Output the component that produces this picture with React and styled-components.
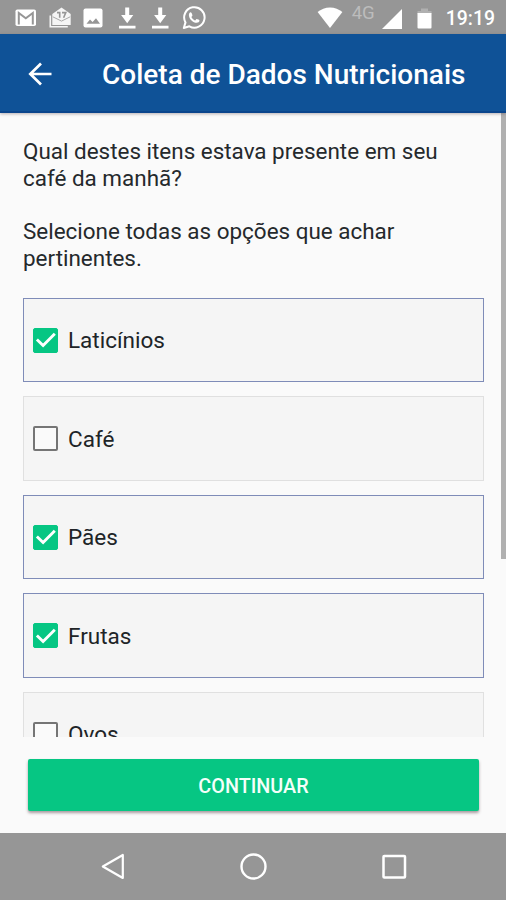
import React, { useState } from 'react';
import styled, { createGlobalStyle } from 'styled-components';

const blue = '#0f5297';
const green = '#06c683';
const grey = '#969696';

const GlobalStyle = createGlobalStyle`
  * { box-sizing: border-box; }
  body {
    margin: 0;
    background: #fafafa;
    font-family: Roboto, sans-serif;
    overflow: hidden;
  }
`;

const Screen = styled.div`
  display: flex;
  flex-direction: column;
  width: 506px;
  height: 900px;
  overflow: hidden;
  background: #fafafa;
`;

const StatusBar = styled.div`
  flex: none;
  display: flex;
  align-items: center;
  justify-content: space-between;
  height: 34px;
  padding: 1px 11px 0 14px;
  background: ${grey};
  color: #fff;
`;

const Notifications = styled.div`
  display: flex;
  gap: 9.6px;
`;

const System = styled.div`
  display: flex;
  align-items: center;
`;

const Icon = styled.svg`
  display: block;
  flex: none;
  width: ${({ $w }) => $w || 24}px;
  height: ${({ $h }) => $h || 24}px;
`;

const Network = styled.span`
  margin: 0 7px 9px 9px;
  color: #bcbcbc;
  font-size: 18.6px;
  line-height: 18px;
`;

const Clock = styled.span`
  margin-left: 14px;
  padding-top: 2px;
  font-size: 19.4px;
  font-weight: 500;
  line-height: 24px;
`;

const Header = styled.header`
  flex: none;
  position: relative;
  display: flex;
  align-items: center;
  height: 79px;
  padding: 5px 0 0 24px;
  background: ${blue};
  border-bottom: 2px solid #0a458c;
  box-shadow: 0 1px 3px rgba(80, 60, 70, 0.4);
  z-index: 1;
`;

const BackButton = styled.button`
  width: 32px;
  margin-right: 46px;
  padding: 0;
  border: 0;
  background: none;
`;

const Title = styled.h1`
  margin: 0;
  color: #fff;
  font-size: 28px;
  font-weight: 500;
  line-height: 32px;
  white-space: nowrap;
`;

const Body = styled.main`
  flex: none;
  display: flex;
  justify-content: space-between;
  height: 624px;
  overflow: hidden;
`;

const Content = styled.div`
  width: 484px;
  padding: 25.4px 0 0 23px;
`;

const Question = styled.p`
  margin: 0 0 26.6px;
  color: #25292c;
  font-size: 22.45px;
  line-height: 26.7px;
`;

const Options = styled.div`
  display: flex;
  flex-direction: column;
  gap: 14px;
  margin-top: -0.8px;
`;

const Option = styled.button`
  flex: none;
  display: flex;
  align-items: center;
  height: 84.5px;
  padding: 1px 0 0 8px;
  border: 1px solid ${({ $checked }) => ($checked ? '#7f8cb8' : '#e0e0e0')};
  background: #f5f5f5;
  color: #202427;
  font-family: inherit;
  font-size: 22.5px;
  line-height: 28px;
  text-align: left;
`;

const Box = styled.span`
  display: flex;
  align-items: center;
  justify-content: center;
  width: 25px;
  height: 25px;
  margin: 0 10px 0 1px;
  border: ${({ $checked }) => ($checked ? '1px' : '2px')} solid
    ${({ $checked }) => ($checked ? green : '#757575')};
  border-radius: 2px;
  background: ${({ $checked }) => ($checked ? green : '#fafafa')};
`;

const Scrollbar = styled.div`
  width: 5px;
  height: 446px;
  background: #b0b0b0;
`;

const Footer = styled.footer`
  flex: none;
  height: 96px;
  padding: 22px 27px 0 28px;
`;

const Continue = styled.button`
  display: block;
  width: 100%;
  height: 52px;
  padding: 2px 0 0;
  border: 0;
  border-radius: 2px;
  background: ${green};
  box-shadow: 0 2px 3px rgba(70, 40, 50, 0.45);
  color: #f4fffa;
  font-family: inherit;
  font-size: 19.8px;
  font-weight: 500;
  text-transform: uppercase;
`;

const NavBar = styled.nav`
  flex: none;
  display: flex;
  align-items: center;
  justify-content: center;
  gap: 112.5px;
  height: 67px;
  padding-left: 1px;
  background: ${grey};
`;

const options = [
  { name: 'Laticínios', checked: true },
  { name: 'Café', checked: false },
  { name: 'Pães', checked: true },
  { name: 'Frutas', checked: true },
  { name: 'Ovos', checked: false },
];

const Mail = () => (
  <Icon viewBox='0 0 24 24'>
    <rect x='1.5' y='3.5' width='20.5' height='16.5' rx='1.8' fill='#fff' />
    <path d='M4.8 18.500V7l7 5.300 7-5.300v11.500' fill='none' stroke={grey} strokeWidth='2' />
  </Icon>
);

const Inbox = () => (
  <Icon viewBox='0 0 24 24'>
    <path d='M2.300 9.500v11.200h17.500' fill='none' stroke='#f5f5f5' strokeWidth='1.600' />
    <path d='M4.300 8 13.500 1.500 22.700 8v10.900H4.300z' fill='#f5f5f5' />
    <path d='M9 6.600h2.700v5.200M14 6.600h3.800l-2.200 5.200' fill='none' stroke={grey} strokeWidth='1.600' />
    <path d='m4.800 10.800 8.700 4.300 8.700-4.300' fill='none' stroke={grey} strokeWidth='.8' />
  </Icon>
);

const Picture = () => (
  <Icon viewBox='0 0 24 24'>
    <rect x='2.500' y='2.500' width='19' height='19' rx='2' fill='#fff' />
    <path d='M5.500 17.800 9 13.600l2.600 2.500 3.400-3.900 4 5.600z' fill={grey} />
  </Icon>
);

const Download = () => (
  <Icon viewBox='0 0 24 24'>
    <path d='M10.200 1.500h4v7.500h4.100L12.200 17.300 6.100 9h4.100zM4 19.700h16.500v2.900H4z' fill='#fff' />
  </Icon>
);

const Chat = () => (
  <Icon viewBox='0 0 24 24'>
    <path
      d='M1.800 22 3.500 16.400a10.200 10.200 0 1 1 3.900 3.900z'
      fill='none'
      stroke='#fff'
      strokeWidth='2'
      strokeLinejoin='round'
    />
    <path
      d='M8.800 6.300c-1.300.2-2 1.500-1.900 2.900.3 4.200 4.200 7.500 7.700 7.600 1.600 0 2.800-1 2.900-2.300.1-.5-2.600-1.800-3-1.500l-1.300 1.500c-1.700-.6-3-1.900-3.800-3.500l1-1.200c.3-.6-.9-3.300-1.600-3.500z'
      fill='#fff'
    />
  </Icon>
);

const Check = () => (
  <Icon viewBox='0 0 24 24'>
    <path d='m2.900 11.500 6.200 6L20.800 5.800' fill='none' stroke='#fff' strokeWidth='2.900' />
  </Icon>
);

const App = () => {
  const [items, setItems] = useState(options);

  const toggle = name => {
    setItems(items.map(i => (i.name === name ? { ...i, checked: !i.checked } : i)));
  };

  return (
    <Screen>
      <GlobalStyle />
      <StatusBar>
        <Notifications>
          <Mail />
          <Inbox />
          <Picture />
          <Download />
          <Download />
          <Chat />
        </Notifications>
        <System>
          <Icon $w={26} viewBox='0 0 26 24'>
            <path d='M13 22 .6 6.100C4 3.200 8.300 1.500 13 1.500s9 1.700 12.400 4.600z' fill='#fff' />
          </Icon>
          <Network>4G</Network>
          <Icon $w={20} viewBox='0 0 20 24'>
            <path d='M20 3v20H0z' fill='#fff' />
          </Icon>
          <Icon $w={30} viewBox='0 0 30 24'>
            <path d='M19 2.500h7V5h3.500v3H15.500V5H19z' fill='#b0b0b0' />
            <path d='M15.500 7h14v14.500a1 1 0 0 1-1 1h-12a1 1 0 0 1-1-1z' fill='#fff' />
          </Icon>
          <Clock>19:19</Clock>
        </System>
      </StatusBar>

      <Header>
        <BackButton aria-label='Voltar'>
          <Icon $w={32} $h={32} viewBox='0 0 32 32'>
            <path d='M27.500 15H6.500M17 4.500 6.300 15 17 25.500' fill='none' stroke='#fff' strokeWidth='2.700' />
          </Icon>
        </BackButton>
        <Title>Coleta de Dados Nutricionais</Title>
      </Header>

      <Body>
        <Content>
          <Question>
            Qual destes itens estava presente em seu
            <br />
            café da manhã?
          </Question>
          <Question>
            Selecione todas as opções que achar
            <br />
            pertinentes.
          </Question>
          <Options>
            {items.map(({ name, checked }) => (
              <Option key={name} $checked={checked} onClick={() => toggle(name)}>
                <Box $checked={checked}>{checked && <Check />}</Box>
                {name}
              </Option>
            ))}
          </Options>
        </Content>
        <Scrollbar />
      </Body>

      <Footer>
        <Continue>Continuar</Continue>
      </Footer>

      <NavBar>
        <Icon $w={28} $h={28} viewBox='0 0 28 28'>
          <path d='M23.800 2v23L3.800 13.500z' fill='none' stroke='#fff' strokeWidth='2.200' strokeLinejoin='round' />
        </Icon>
        <Icon $w={28} $h={28} viewBox='0 0 28 28'>
          <circle cx='13.500' cy='13.500' r='12' fill='none' stroke='#fff' strokeWidth='2.400' />
        </Icon>
        <Icon $w={28} $h={28} viewBox='0 0 28 28'>
          <rect x='3.500' y='3' width='21.500' height='21.500' rx='.8' fill='none' stroke='#fff' strokeWidth='2.500' />
        </Icon>
      </NavBar>
    </Screen>
  );
};

export default App;
